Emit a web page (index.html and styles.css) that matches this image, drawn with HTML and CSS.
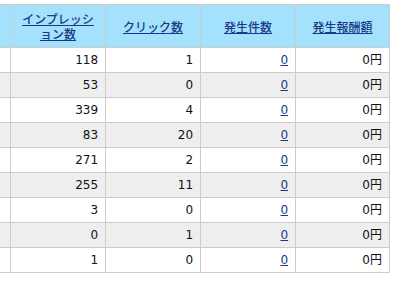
FILE: index.html
```html
<!DOCTYPE html>
<html lang="ja">
<head>
<meta charset="utf-8">
<link rel="stylesheet" href="styles.css">
</head>
<body>
<div class="wrap">
<table class="report">
<thead>
<tr>
<th class="c0"></th>
<th class="c"><a href="#">インプレッション数</a></th>
<th class="c"><a href="#">クリック数</a></th>
<th class="c"><a href="#">発生件数</a></th>
<th class="c last"><a href="#">発生報酬額</a></th>
</tr>
</thead>
<tbody>
<tr><td></td><td>118</td><td>1</td><td><a href="#">0</a></td><td>0円</td></tr>
<tr class="alt"><td></td><td>53</td><td>0</td><td><a href="#">0</a></td><td>0円</td></tr>
<tr><td></td><td>339</td><td>4</td><td><a href="#">0</a></td><td>0円</td></tr>
<tr class="alt"><td></td><td>83</td><td>20</td><td><a href="#">0</a></td><td>0円</td></tr>
<tr><td></td><td>271</td><td>2</td><td><a href="#">0</a></td><td>0円</td></tr>
<tr class="alt"><td></td><td>255</td><td>11</td><td><a href="#">0</a></td><td>0円</td></tr>
<tr><td></td><td>3</td><td>0</td><td><a href="#">0</a></td><td>0円</td></tr>
<tr class="alt"><td></td><td>0</td><td>1</td><td><a href="#">0</a></td><td>0円</td></tr>
<tr><td></td><td>1</td><td>0</td><td><a href="#">0</a></td><td>0円</td></tr>
</tbody>
</table>
</div>
</body>
</html>
```

FILE: styles.css
```css
html, body {
  margin: 0;
  padding: 0;
  background: #ffffff;
}
body {
  font-family: "DejaVu Sans", Verdana, "Noto Sans CJK JP", sans-serif;
  font-size: 12px;
  color: #111111;
  overflow: hidden;
}
.wrap {
  padding-top: 4px;
  margin-left: -85px;
}
.report {
  border-collapse: collapse;
  table-layout: fixed;
  width: 475px;
}
.report th,
.report td {
  border: 1px solid #cccccc;
  padding: 0 7px;
  width: 81px;
  text-align: right;
  white-space: nowrap;
}
.report th {
  background: #a4e1fc;
  text-align: center;
  height: 43px;
  padding: 6px 7px;
  box-sizing: border-box;
  line-height: 15px;
  font-weight: 500;
  white-space: normal;
  font-family: "Noto Sans CJK JP", sans-serif;
}
.report th.last {
  width: 80px;
}
.report td {
  height: 24px;
  line-height: 24px;
}
.report tr.alt td {
  background: #eeeeee;
}
.report a {
  color: #183a86;
  text-decoration: underline;
}
```
